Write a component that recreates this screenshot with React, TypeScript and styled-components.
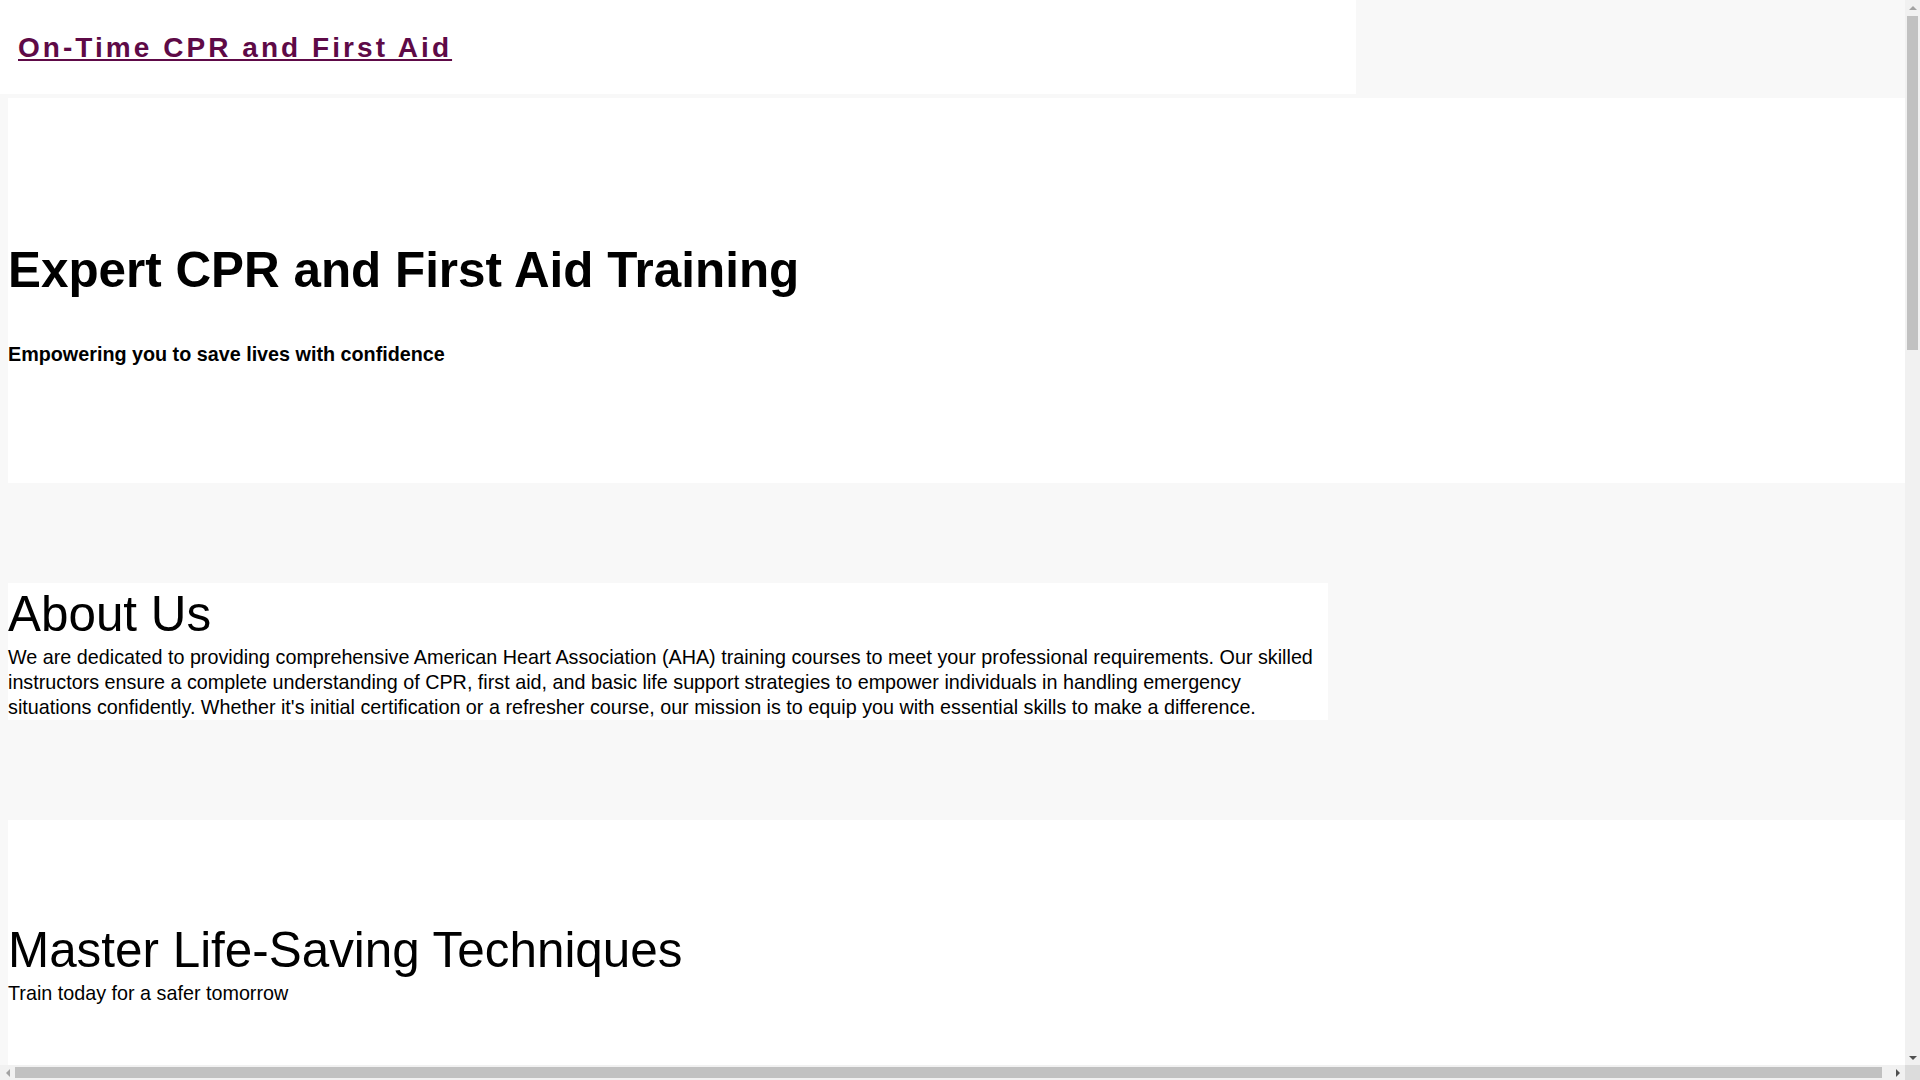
import React from "react";
import styled, { createGlobalStyle } from "styled-components";

const GlobalStyle = createGlobalStyle`
  html, body {
    margin: 0;
    padding: 0;
  }
  body {
    background: #f8f8f8;
    color: #000;
    font-family: "Liberation Sans", Arial, sans-serif;
  }
`;

const Header = styled.header`
  box-sizing: border-box;
  width: 1356px;
  height: 94px;
  padding: 32px 18px 0;
  background: #fff;
`;

const Brand = styled.a`
  font-size: 28px;
  font-weight: 700;
  letter-spacing: 3.05px;
  color: #5e0a47;
  text-decoration: underline;
`;

const Main = styled.main`
  width: 100%;
  margin: 4px 0 0 8px;
  display: flex;
  flex-direction: column;
  gap: 100px;
`;

const Section = styled.section<{ $width?: string; $pad?: string }>`
  box-sizing: border-box;
  width: ${(p) => p.$width ?? "100%"};
  padding: ${(p) => p.$pad ?? "0"};
  background: #fff;
`;

const HeroTitle = styled.h1`
  margin: 0 0 42px;
  font-size: 49.4px;
  line-height: 60px;
  font-weight: 700;
`;

const HeroTagline = styled.h2`
  margin: 0;
  font-size: 19.75px;
  line-height: 25px;
  font-weight: 700;
`;

const SectionTitle = styled.h2`
  margin: 0;
  font-size: 49.4px;
  line-height: 62px;
  font-weight: 400;
`;

const BodyText = styled.p<{ $gap?: number }>`
  margin: 0 0 ${(p) => p.$gap ?? 0}px;
  font-size: 19.75px;
  line-height: 25px;
`;

const ItemList = styled.ul`
  list-style: none;
  margin: 30px 0 0;
  padding: 0;
  display: flex;
  flex-direction: column;
  gap: 20px;
`;

const Item = styled.li`
  display: flex;
  flex-direction: column;
`;

const ItemName = styled.h3`
  margin: 0;
  font-size: 19.75px;
  line-height: 25px;
  font-weight: 700;
`;

const Footer = styled.footer`
  box-sizing: border-box;
  width: 100%;
  padding: 140px 0;
  background: #fff;
  font-size: 16px;
  line-height: 25px;
`;

/* Browser-style scrollbars, drawn over the page */
const VTrack = styled.div`
  position: fixed;
  top: 0;
  right: 0;
  width: 15px;
  height: calc(100vh - 15px);
  background: #f1f1f1;
  display: flex;
  flex-direction: column;
  z-index: 10;
`;

const HTrack = styled.div`
  position: fixed;
  left: 0;
  bottom: 0;
  width: calc(100vw - 15px);
  height: 15px;
  background: #f1f1f1;
  display: flex;
  z-index: 10;
`;

const Corner = styled.div`
  position: fixed;
  right: 0;
  bottom: 0;
  width: 15px;
  height: 15px;
  background: #dcdcdc;
  z-index: 10;
`;

const ArrowButton = styled.div`
  flex: 0 0 15px;
  width: 15px;
  height: 15px;
  display: flex;
  align-items: center;
  justify-content: center;
`;

const ThumbArea = styled.div<{ $vertical?: boolean }>`
  flex: 1;
  display: flex;
  flex-direction: ${(p) => (p.$vertical ? "column" : "row")};
  padding: ${(p) => (p.$vertical ? "1px 2px 0" : "2px 0 2px 0")};
`;

const Thumb = styled.div`
  background: #c1c1c1;
`;

type Dir = "up" | "down" | "left" | "right";
const arrowPoints: Record<Dir, string> = {
  up: "0,4 8,4 4,0",
  down: "0,0 8,0 4,4",
  left: "4,0 4,8 0,4",
  right: "0,0 0,8 4,4",
};

function Arrow({ dir, color }: { dir: Dir; color: string }) {
  const vertical = dir === "up" || dir === "down";
  return (
    <ArrowButton>
      <svg width={vertical ? 8 : 4} height={vertical ? 4 : 8} viewBox={vertical ? "0 0 8 4" : "0 0 4 8"}>
        <polygon points={arrowPoints[dir]} fill={color} />
      </svg>
    </ArrowButton>
  );
}

const courses = [
  ["BLS Provider", "Basic Life Support for healthcare professionals."],
  ["Heartsaver CPR AED", "CPR and AED skills for the workplace and community."],
  ["Heartsaver First Aid", "Respond to common first aid emergencies with confidence."],
  ["ACLS", "Advanced Cardiovascular Life Support for clinical teams."],
  ["PALS", "Pediatric Advanced Life Support for infants and children."],
];

const reasons = [
  "Certified AHA instructors with real-world experience",
  "Flexible class schedules, including evenings and weekends",
  "Hands-on practice with modern training equipment",
  "Same-day certification cards for most courses",
];

export default function App() {
  return (
    <>
      <GlobalStyle />
      <Header>
        <Brand href="#">On-Time CPR and First Aid</Brand>
      </Header>
      <Main>
        <Section $pad="142px 0 116px">
          <HeroTitle>Expert CPR and First Aid Training</HeroTitle>
          <HeroTagline>Empowering you to save lives with confidence</HeroTagline>
        </Section>
        <Section $width="1320px">
          <SectionTitle>About Us</SectionTitle>
          <BodyText>
            We are dedicated to providing comprehensive American Heart Association (AHA) training
            courses to meet your professional requirements. Our skilled instructors ensure a complete
            understanding of CPR, first aid, and basic life support strategies to empower individuals in
            handling emergency situations confidently. Whether it's initial certification or a refresher
            course, our mission is to equip you with essential skills to make a difference.
          </BodyText>
        </Section>
        <Section $pad="99px 0 194px">
          <SectionTitle>Master Life-Saving Techniques</SectionTitle>
          <BodyText>Train today for a safer tomorrow</BodyText>
        </Section>
        <Section $pad="100px 0">
          <SectionTitle>Our Courses</SectionTitle>
          <ItemList>
            {courses.map(([name, text]) => (
              <Item key={name}>
                <ItemName>{name}</ItemName>
                <BodyText>{text}</BodyText>
              </Item>
            ))}
          </ItemList>
        </Section>
        <Section $pad="100px 0">
          <SectionTitle>Why Choose Us</SectionTitle>
          <ItemList>
            {reasons.map((r) => (
              <Item key={r}>
                <BodyText>{r}</BodyText>
              </Item>
            ))}
          </ItemList>
        </Section>
        <Section $pad="100px 0">
          <SectionTitle>Contact Us</SectionTitle>
          <BodyText $gap={10}>Call us to schedule your class today.</BodyText>
          <BodyText>Group and on-site training available.</BodyText>
        </Section>
        <Footer>© On-Time CPR and First Aid. All rights reserved.</Footer>
      </Main>

      <VTrack>
        <Arrow dir="up" color="#a3a3a3" />
        <ThumbArea $vertical>
          <Thumb style={{ height: "334px" }} />
        </ThumbArea>
        <Arrow dir="down" color="#505050" />
      </VTrack>
      <HTrack>
        <Arrow dir="left" color="#a3a3a3" />
        <ThumbArea>
          <Thumb style={{ width: "1867px" }} />
        </ThumbArea>
        <Arrow dir="right" color="#505050" />
      </HTrack>
      <Corner />
    </>
  );
}
